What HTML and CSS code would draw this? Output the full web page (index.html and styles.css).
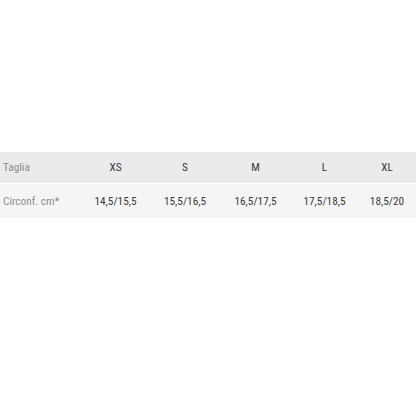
FILE: index.html
```html
<!DOCTYPE html>
<html lang="it">
<head>
<meta charset="utf-8">
<link rel="stylesheet" href="styles.css">
</head>
<body>
<div class="page">
  <div class="sizes">
    <div class="row head">
      <div class="label">Taglia</div>
      <div class="cell">XS</div>
      <div class="cell">S</div>
      <div class="cell">M</div>
      <div class="cell">L</div>
      <div class="cell">XL</div>
    </div>
    <div class="row body">
      <div class="label">Circonf. cm*</div>
      <div class="cell">14,5/15,5</div>
      <div class="cell">15,5/16,5</div>
      <div class="cell">16,5/17,5</div>
      <div class="cell">17,5/18,5</div>
      <div class="cell">18,5/20</div>
    </div>
  </div>
</div>
</body>
</html>
```
FILE: styles.css
```css
html, body {
  margin: 0;
  padding: 0;
  background: #ffffff;
}
.page {
  width: 416px;
  height: 416px;
  padding-top: 152px;
  box-sizing: border-box;
}
.sizes {
  font-family: "Roboto Condensed", "Roboto", sans-serif;
  font-stretch: 75%;
  font-size: 11.3px;
  color: #3a3a3a;
}
.row {
  display: grid;
  grid-template-columns: 81px 69px 70px 71px 67px 58px;
  align-items: center;
}
.head {
  height: 31px;
  background: #ebebeb;
  border-bottom: 1px solid #ffffff;
}
.body {
  height: 34px;
  background: #f5f5f5;
}
.label {
  padding-left: 3px;
  color: #8c8c8c;
}
.cell {
  text-align: center;
}
```
